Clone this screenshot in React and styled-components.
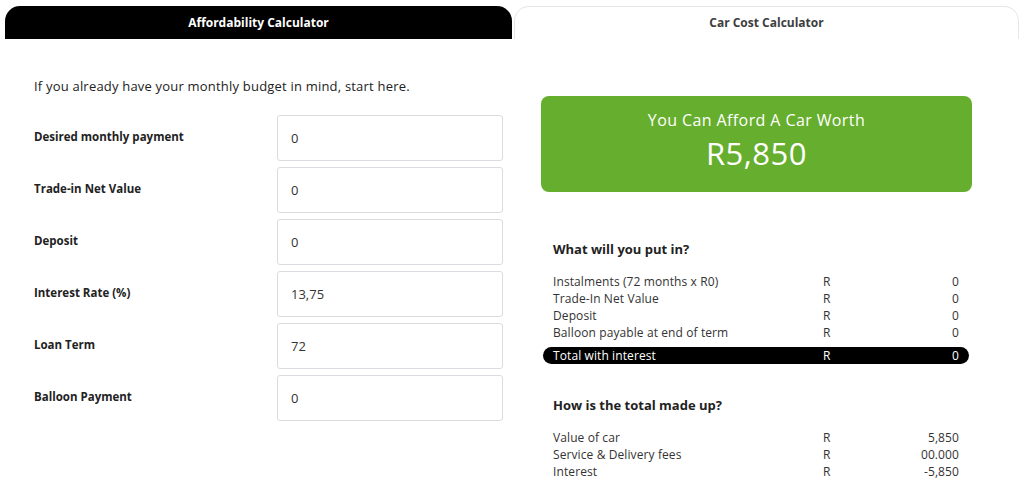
import React from 'react';
import styled, { createGlobalStyle } from 'styled-components';

const GlobalStyle = createGlobalStyle`
  body {
    margin: 0;
    background: #fff;
    font-family: "Open Sans", "Liberation Sans", sans-serif;
    color: #222;
  }
`;

const fields = [
  { label: 'Desired monthly payment', value: '0' },
  { label: 'Trade-in Net Value', value: '0' },
  { label: 'Deposit', value: '0' },
  { label: 'Interest Rate (%)', value: '13,75' },
  { label: 'Loan Term', value: '72' },
  { label: 'Balloon Payment', value: '0' },
];

const putIn = [
  ['Instalments (72 months x R0)', '0'],
  ['Trade-In Net Value', '0'],
  ['Deposit', '0'],
  ['Balloon payable at end of term', '0'],
];

const madeUp = [
  ['Value of car', '5,850'],
  ['Service & Delivery fees', '00.000'],
  ['Interest', '-5,850'],
];

export default function App () {
  return (
    <>
      <GlobalStyle />
      <Page>
        <Column>
          <Tab $active>Affordability Calculator</Tab>
          <LeftBody>
            <Intro>If you already have your monthly budget in mind, start here.</Intro>
            <Form>
              {fields.map(f => (
                <FieldRow key={f.label}>
                  <Label>{f.label}</Label>
                  <Input defaultValue={f.value} />
                </FieldRow>
              ))}
            </Form>
          </LeftBody>
        </Column>
        <Column>
          <Tab>Car Cost Calculator</Tab>
          <RightBody>
            <Result>
              <p>You Can Afford A Car Worth</p>
              <strong>R5,850</strong>
            </Result>
            <Section $gap={48}>
              <Heading>What will you put in?</Heading>
              {putIn.map(([name, val]) => (
                <Line key={name}>
                  <span>{name}</span>
                  <span>R</span>
                  <Amount>{val}</Amount>
                </Line>
              ))}
              <Line $total>
                <span>Total with interest</span>
                <span>R</span>
                <Amount>0</Amount>
              </Line>
            </Section>
            <Section $gap={32}>
              <Heading>How is the total made up?</Heading>
              {madeUp.map(([name, val]) => (
                <Line key={name}>
                  <span>{name}</span>
                  <span>R</span>
                  <Amount>{val}</Amount>
                </Line>
              ))}
            </Section>
          </RightBody>
        </Column>
      </Page>
    </>
  );
}

const Page = styled.div`
  display: grid;
  grid-template-columns: 507px 505px;
  column-gap: 2px;
  padding: 6px 0 0 5px;
`;

const Column = styled.div`
  display: flex;
  flex-direction: column;
`;

const Tab = styled.div`
  height: 33px;
  display: flex;
  align-items: center;
  justify-content: center;
  border-radius: 15px 15px 0 0;
  font-size: 12px;
  font-weight: 700;
  box-sizing: border-box;
  background: ${p => (p.$active ? '#000' : '#fff')};
  color: ${p => (p.$active ? '#fff' : '#3d3d40')};
  border: ${p => (p.$active ? 'none' : '1px solid #e6e6e6')};
  border-bottom: none;
  padding-bottom: ${p => (p.$active ? '0' : '2px')};
`;

const LeftBody = styled.div`
  padding: 38px 9px 0 29px;
`;

const Intro = styled.p`
  margin: 0 0 20px;
  font-size: 13px;
  line-height: 18px;
  letter-spacing: 0.2px;
  color: #222;
`;

const Form = styled.div`
  display: flex;
  flex-direction: column;
  gap: 6px;
`;

const FieldRow = styled.div`
  display: grid;
  grid-template-columns: 243px 226px;
  align-items: center;
`;

const Label = styled.label`
  font-size: 11.5px;
  font-weight: 700;
  color: #222;
  margin-top: -4px;
`;

const Input = styled.input`
  height: 46px;
  box-sizing: border-box;
  border: 1px solid #dcdce0;
  border-radius: 3px;
  padding: 0 13px;
  font-family: inherit;
  font-size: 13px;
  color: #333;
  background: #fff;
  outline: none;
`;

const RightBody = styled.div`
  padding: 57px 47px 0 27px;
`;

const Result = styled.div`
  height: 96px;
  width: 431px;
  box-sizing: border-box;
  background: #66ae2d;
  border-radius: 8px;
  color: #fff;
  display: flex;
  flex-direction: column;
  align-items: center;
  padding-top: 13px;

  p {
    margin: 0;
    font-size: 16px;
    line-height: 22px;
    letter-spacing: 0.4px;
  }

  strong {
    font-weight: 500;
    font-size: 31px;
    line-height: 40px;
    letter-spacing: 0.5px;
    margin-top: 2px;
  }
`;

const Section = styled.div`
  margin: ${p => p.$gap}px 0 0 2px;
  width: 426px;
  display: flex;
  flex-direction: column;
`;

const Heading = styled.h3`
  margin: 0 10px 15px;
  font-size: 13px;
  font-weight: 700;
  line-height: 18px;
  color: #222;
`;

const Line = styled.div`
  display: grid;
  grid-template-columns: 270px 1fr auto;
  padding: 0 10px;
  height: 17px;
  align-items: center;
  font-size: 12px;
  letter-spacing: 0.1px;
  color: ${p => (p.$total ? '#fff' : '#333')};
  background: ${p => (p.$total ? '#000' : 'transparent')};
  border-radius: ${p => (p.$total ? '9px' : '0')};
  margin-top: ${p => (p.$total ? '6px' : '0')};
`;

const Amount = styled.span`
  text-align: right;
`;
